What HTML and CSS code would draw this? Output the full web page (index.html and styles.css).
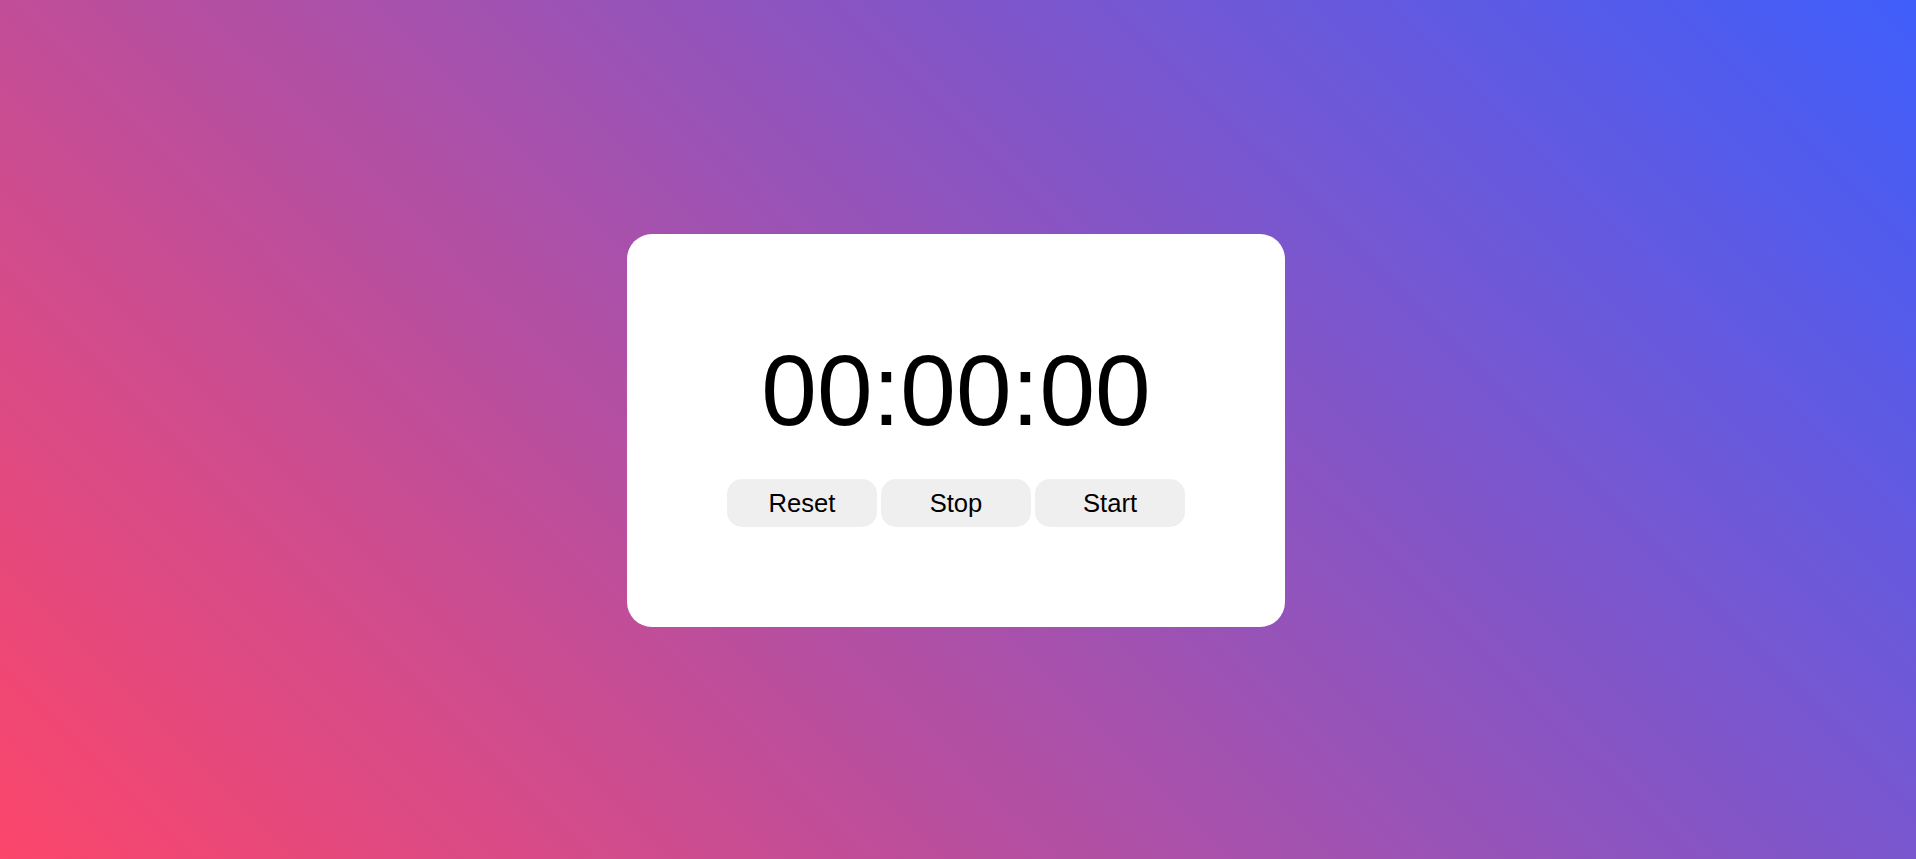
FILE: index.html
```html
<!DOCTYPE html>
<html lang="en">
<head>
<meta charset="utf-8">
<title>Stopwatch</title>
<link rel="stylesheet" href="styles.css">
</head>
<body>
<main class="page">
  <section class="card">
    <div class="timer">00:00:00</div>
    <div class="controls">
      <button class="btn">Reset</button>
      <button class="btn">Stop</button>
      <button class="btn">Start</button>
    </div>
  </section>
</main>
</body>
</html>
```

FILE: styles.css
```css
html, body {
  margin: 0;
  padding: 0;
  height: 100%;
}
body {
  font-family: "Liberation Sans", Arial, sans-serif;
  background: linear-gradient(45deg, #fc466b, #3f5efb);
  overflow: hidden;
}
.page {
  box-sizing: border-box;
  height: 100vh;
  display: flex;
  align-items: center;
  justify-content: center;
  padding: 2px 4px 0 0;
}
.card {
  width: 658px;
  box-sizing: border-box;
  background: #ffffff;
  border-radius: 25px;
  padding: 99px 0 100px;
  display: flex;
  flex-direction: column;
  align-items: center;
}
.timer {
  font-size: 100px;
  line-height: 115px;
  color: #000;
  margin-bottom: 31px;
}
.controls {
  display: flex;
  gap: 4px;
}
.btn {
  width: 150px;
  height: 48px;
  border: none;
  border-radius: 15px;
  background: #efefef;
  color: #000;
  font-family: "Liberation Sans", Arial, sans-serif;
  font-size: 25.6px;
  line-height: 30px;
  padding: 0;
  cursor: pointer;
}
```
